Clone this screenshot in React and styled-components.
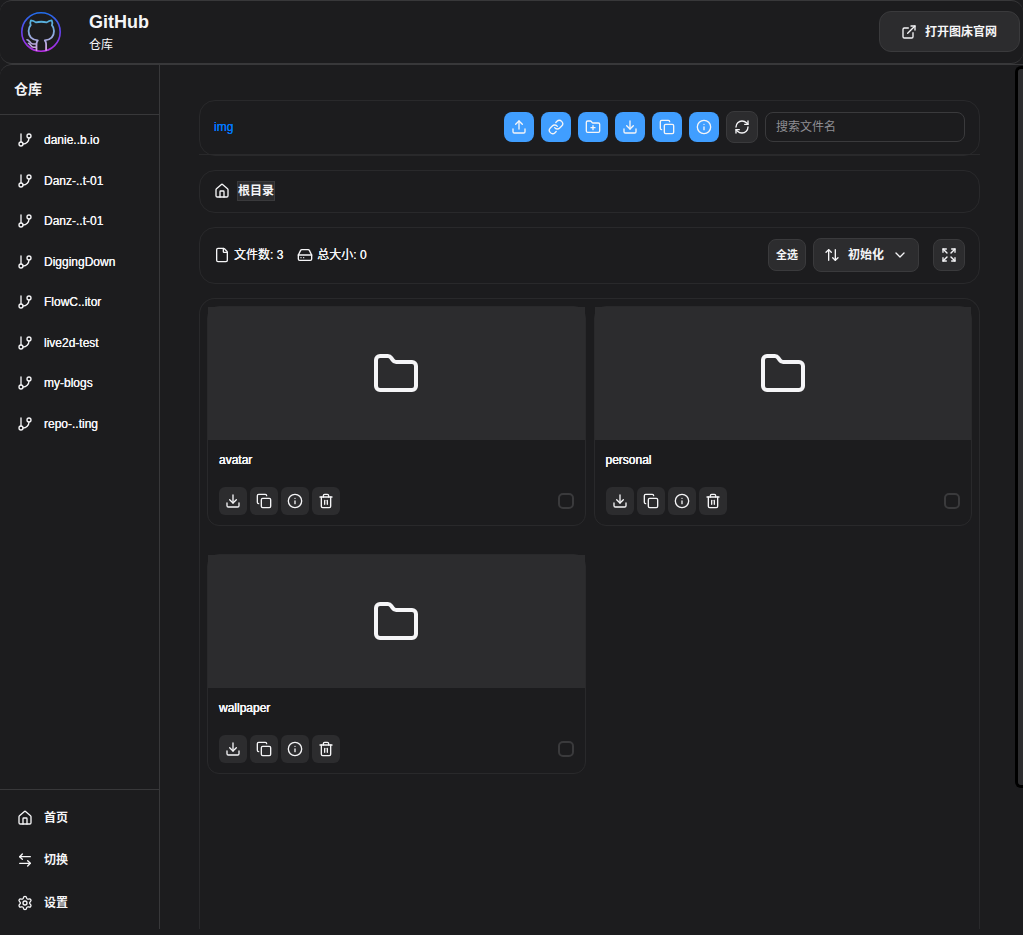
import { useState } from 'react';
import styled, { createGlobalStyle } from 'styled-components';
import {
    ArrowLeftRight, ArrowUpDown, ChevronDown, Copy, Download, Expand, ExternalLink,
    File, Folder, FolderPlus, GitBranch, HardDrive, House, Info, Link, RefreshCw,
    Settings, Trash2, Upload,
} from 'lucide-react';

const colors = {
    bg: '#1c1c1e',
    panel: '#2c2c2e',
    border: '#3a3a3c',
    line: '#38383a',
    faint: '#29292b',
    text: '#f5f5f7',
    muted: '#8e8e93',
    blue: '#409eff',
    link: '#007aff',
}

const GlobalStyle = createGlobalStyle`
    * {
        box-sizing: border-box;
    }
    body {
        margin: 0;
        background: ${colors.bg};
        color: ${colors.text};
        font-family: "Liberation Sans", Arial, "Noto Sans CJK SC", sans-serif;
        font-size: 12px;
        line-height: 16px;
    }
    button, input {
        font: inherit;
        color: inherit;
    }
    button {
        cursor: pointer;
    }
    a {
        color: inherit;
        text-decoration: none;
    }
`
const Page = styled.div`
    display: flex;
    flex-direction: column;
    height: 100vh;
    padding-bottom: 6px;
`
const Header = styled.header`
    display: flex;
    align-items: center;
    flex: 0 0 64px;
    padding: 0 3px 1px 21px;
    border: solid ${colors.line};
    border-width: 1px 0;
    border-radius: 12px;
`
const Brand = styled.div`
    flex: 1;
    margin-left: 28px;
`
const BrandName = styled.h1`
    margin: 0;
    font-size: 18px;
    line-height: 26px;
`
const BrandSub = styled.p`
    margin: 0;
    line-height: 20px;
`
const SiteLink = styled.a`
    display: flex;
    align-items: center;
    gap: 8px;
    height: 41px;
    padding: 0 22px 0 21px;
    border: 1px solid ${colors.border};
    border-radius: 12px;
    background: ${colors.panel};
    font-weight: 700;
`
const Body = styled.div`
    display: flex;
    flex: 1;
    min-height: 0;
`
const Sidebar = styled.aside`
    display: flex;
    flex-direction: column;
    flex: 0 0 160px;
    border-top: 1px solid ${colors.line};
    border-right: 1px solid ${colors.line};
    border-top-left-radius: 12px;
`
const SideTitle = styled.h2`
    margin: 0;
    padding: 14px 14px 15px;
    border-bottom: 1px solid ${colors.line};
    font-size: 14px;
    line-height: 20px;
`
const RepoList = styled.nav`
    display: grid;
    grid-auto-rows: 1fr;
    height: 324px;
    margin: 5px 0 auto;
`
const SideNav = styled.nav`
    display: grid;
    grid-auto-rows: 1fr;
    height: 140px;
    padding: 7px 0 5px;
    border-top: 1px solid ${colors.line};
`
const SideLink = styled.a`
    display: flex;
    align-items: center;
    gap: 11px;
    padding: 0 17px;
    font-weight: ${({ $bold }) => ($bold ? 700 : 400)};
    text-shadow: ${({ $bold }) => ($bold ? 'none' : '0 0 0 currentColor')};
`
const Main = styled.main`
    display: flex;
    flex-direction: column;
    flex: 1;
    min-width: 0;
    padding: 35px 35px 0 39px;
    border-top: 1px solid ${colors.line};
`
const Toolbar = styled.div`
    flex: none;
    height: 55px;
    margin-bottom: 15px;
    border-bottom: 1px solid ${colors.faint};
`
const Bar = styled.section`
    display: flex;
    align-items: center;
    flex: none;
    height: ${({ $height }) => $height}px;
    gap: 7px;
    margin-bottom: 14px;
    padding: 0 14px 2px;
    border: 1px solid ${colors.faint};
    border-radius: 16px;
`
const BucketLink = styled.a`
    margin-right: auto;
    color: ${colors.link};
    text-shadow: 0 0 0 currentColor;
`
const ToolButton = styled.button`
    display: grid;
    place-items: center;
    width: 30px;
    height: 30px;
    padding: 0;
    border: 0;
    border-radius: 8px;
    background: ${colors.blue};
`
const PlainButton = styled.button`
    display: flex;
    align-items: center;
    justify-content: center;
    gap: 8px;
    height: ${({ $height = 32 }) => $height}px;
    min-width: 32px;
    padding: 0 ${({ $pad = 0 }) => $pad}px;
    border: 1px solid ${colors.border};
    border-radius: 8px;
    background: ${colors.panel};
    font-size: ${({ $small }) => ($small ? 11 : 12)}px;
    font-weight: 700;
`
const SortButton = styled(PlainButton)`
    margin-right: 7px;
`
const Search = styled.input`
    width: 200px;
    height: 30px;
    padding: 0 10px;
    border: 1px solid ${colors.border};
    border-radius: 8px;
    background: transparent;
    outline: none;
    &::placeholder {
        color: ${colors.muted};
        opacity: 1;
    }
`
const Crumb = styled.a`
    border: 1px solid ${colors.border};
    background: ${colors.panel};
    font-weight: 700;
    line-height: 18px;
`
const Stat = styled.span`
    display: flex;
    align-items: center;
    gap: 4px;
    margin-right: 7px;
    text-shadow: 0 0 0 currentColor;
`
const Spacer = styled.div`
    flex: 1;
`
const Files = styled.section`
    display: grid;
    grid-template-columns: repeat(auto-fill, minmax(300px, 1fr));
    align-content: start;
    gap: 28px 8px;
    flex: 1;
    min-height: 0;
    padding: 7px 7px 0;
    border: 1px solid ${colors.faint};
    border-bottom: 0;
    border-radius: 16px 16px 0 0;
`
const CardBox = styled.article`
    border: 1px solid ${colors.faint};
    border-radius: 12px;
`
const Cover = styled.div`
    display: grid;
    place-items: center;
    height: 133px;
    background: ${colors.panel};
`
const CardInfo = styled.div`
    padding: 10px 11px;
`
const CardTitle = styled.h3`
    margin: 0;
    font-size: 12px;
    font-weight: 400;
    line-height: 20px;
    text-shadow: 0 0 0 currentColor, 0 0 0 currentColor;
`
const CardActions = styled.div`
    display: flex;
    align-items: center;
    gap: 3px;
    margin-top: 17px;
`
const CardButton = styled.button`
    display: grid;
    place-items: center;
    width: 28px;
    height: 28px;
    padding: 0;
    border: 0;
    border-radius: 6px;
    background: ${colors.panel};
`
const Check = styled.input`
    appearance: none;
    width: 16px;
    height: 16px;
    margin: 0 0 0 auto;
    border: 2px solid ${colors.border};
    border-radius: 5px;
    &:checked {
        background: ${colors.blue};
    }
`
const ScrollTrack = styled.div`
    flex: 0 0 8px;
    padding: 1px 0 4px;
    border-top: 1px solid ${colors.line};
`
const ScrollThumb = styled.div`
    height: 84%;
    border: 3px solid #000;
    border-right: 0;
    border-radius: 6px 0 0 6px;
    background: ${colors.panel};
`

const repos = ['danie..b.io', 'Danz-..t-01', 'Danz-..t-01', 'DiggingDown', 'FlowC..itor', 'live2d-test', 'my-blogs', 'repo-..ting']
const navItems = [
    { label: '首页', Icon: House },
    { label: '切换', Icon: ArrowLeftRight },
    { label: '设置', Icon: Settings },
]
const tools = [
    { label: '上传', Icon: Upload },
    { label: '链接', Icon: Link },
    { label: '新建文件夹', Icon: FolderPlus },
    { label: '下载', Icon: Download },
    { label: '复制', Icon: Copy },
    { label: '详情', Icon: Info },
]
const cardTools = [
    { label: '下载', Icon: Download },
    { label: '复制', Icon: Copy },
    { label: '详情', Icon: Info },
    { label: '删除', Icon: Trash2 },
]
const folders = ['avatar', 'personal', 'wallpaper']

function Logo() {
    return (
        <svg width="40" height="40" viewBox="0 0 40 40" fill="none" strokeLinecap="round" strokeLinejoin="round">
            <defs>
                <linearGradient id="ring" x1="0" y1="0" x2="0" y2="40" gradientUnits="userSpaceOnUse">
                    <stop stopColor="#1f6feb" />
                    <stop offset="0.5" stopColor="#6543f0" />
                    <stop offset="1" stopColor="#b52be0" />
                </linearGradient>
                <linearGradient id="cat" x1="0" y1="8" x2="0" y2="38" gradientUnits="userSpaceOnUse">
                    <stop stopColor="#4fb0dc" />
                    <stop offset="1" stopColor="#d5a5e0" />
                </linearGradient>
            </defs>
            <circle cx="20" cy="20" r="19.2" stroke="url(#ring)" strokeWidth="1.6" />
            <path
                d="M15.500 38v-6c0-1.400.5-2.600 1.300-3.600-5.600-.6-9.200-3.800-9.200-9.400 0-2.400.8-4.300 2.100-5.800-.6-1.600-.5-3.500.2-4.900 1.800.2 3.400.9 5 2.100 3.300-.8 7.500-.8 10.800 0 1.600-1.200 3.200-1.900 5-2.100.7 1.400.8 3.300.2 4.900 1.300 1.500 2.100 3.400 2.100 5.800 0 5.600-3.600 8.800-9.200 9.400.8 1 1.300 2.200 1.300 3.600v6"
                stroke="url(#cat)"
                strokeWidth="1.8"
            />
            <path
                d="M6 27.800c2.600 0 3 4.200 5.800 4.200h3.500M7.500 31.200c1.800.4 2.300 4 5 4h2.500"
                stroke="url(#cat)"
                strokeWidth="1.6"
            />
        </svg>
    )
}

function FolderCard({ name }) {
    const [checked, setChecked] = useState(false)
    return (
        <CardBox>
            <Cover><Folder size={48} /></Cover>
            <CardInfo>
                <CardTitle>{name}</CardTitle>
                <CardActions>
                    {cardTools.map(({ label, Icon }) => (
                        <CardButton key={label} type="button" aria-label={`${label} ${name}`}>
                            <Icon size={16} />
                        </CardButton>
                    ))}
                    <Check type="checkbox" aria-label={name} checked={checked} onChange={() => setChecked(!checked)} />
                </CardActions>
            </CardInfo>
        </CardBox>
    )
}

function App() {
    return (
        <Page>
            <GlobalStyle />
            <Header>
                <Logo />
                <Brand>
                    <BrandName>GitHub</BrandName>
                    <BrandSub>仓库</BrandSub>
                </Brand>
                <SiteLink href="#site"><ExternalLink size={16} />打开图床官网</SiteLink>
            </Header>
            <Body>
                <Sidebar>
                    <SideTitle>仓库</SideTitle>
                    <RepoList>
                        {repos.map((repo, i) => (
                            <SideLink key={i} href="#repo"><GitBranch size={16} />{repo}</SideLink>
                        ))}
                    </RepoList>
                    <SideNav>
                        {navItems.map(({ label, Icon }) => (
                            <SideLink key={label} href="#nav" $bold><Icon size={16} />{label}</SideLink>
                        ))}
                    </SideNav>
                </Sidebar>
                <Main>
                    <Toolbar>
                        <Bar $height={56}>
                            <BucketLink href="#img">img</BucketLink>
                            {tools.map(({ label, Icon }) => (
                                <ToolButton key={label} type="button" aria-label={label}><Icon size={16} /></ToolButton>
                            ))}
                            <PlainButton type="button" aria-label="刷新"><RefreshCw size={16} /></PlainButton>
                            <Search type="text" aria-label="搜索文件名" placeholder="搜索文件名" />
                        </Bar>
                    </Toolbar>
                    <Bar $height={43}>
                        <House size={16} />
                        <Crumb href="#root">根目录</Crumb>
                    </Bar>
                    <Bar $height={57}>
                        <Stat><File size={16} />文件数: 3</Stat>
                        <Stat><HardDrive size={16} />总大小: 0</Stat>
                        <Spacer />
                        <PlainButton type="button" $small $pad={7}>全选</PlainButton>
                        <SortButton type="button" $height={34} $pad={10}>
                            <ArrowUpDown size={16} />初始化<ChevronDown size={16} />
                        </SortButton>
                        <PlainButton type="button" aria-label="全屏"><Expand size={16} /></PlainButton>
                    </Bar>
                    <Files>
                        {folders.map((name) => <FolderCard key={name} name={name} />)}
                    </Files>
                </Main>
                <ScrollTrack><ScrollThumb /></ScrollTrack>
            </Body>
        </Page>
    )
}

export default App
